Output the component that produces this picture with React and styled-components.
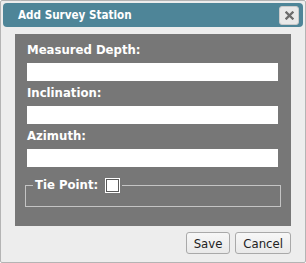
import styled, { createGlobalStyle } from 'styled-components';

const GlobalStyle = createGlobalStyle`
  html, body {
    margin: 0;
    padding: 0;
    background: #ffffff;
  }
  body {
    font-family: "DejaVu Sans Condensed", "DejaVu Sans", sans-serif;
  }
`

const Dialog = styled.div`
  width: 306px;
  height: 263px;
  box-sizing: border-box;
  border: 1px solid #b4b4b4;
  border-radius: 2px;
  background: #ededed;
  padding: 2px;
  display: flex;
  flex-direction: column;
`

const TitleBar = styled.div`
  height: 24px;
  box-sizing: border-box;
  background: #4e8598;
  border-radius: 4px;
  display: flex;
  align-items: center;
  justify-content: space-between;
  padding: 0 4px 0 15px;
`

const Title = styled.span`
  color: #ffffff;
  font-weight: bold;
  font-size: 11.6px;
`

const CloseButton = styled.button`
  width: 20px;
  height: 19px;
  box-sizing: border-box;
  margin-top: 1px;
  padding: 0;
  border: 1px solid #cacaca;
  border-radius: 3px;
  background: #e9e9e9;
  display: flex;
  align-items: center;
  justify-content: center;
`

const Panel = styled.div`
  margin: 7px 12px 0 12px;
  height: 192px;
  box-sizing: border-box;
  background: #777777;
  padding: 8px 13px 0 12px;
  display: flex;
  flex-direction: column;
`

const Label = styled.label`
  color: #ffffff;
  font-weight: bold;
  font-size: 13px;
  line-height: 16px;
  height: 16px;
  margin-top: ${p => (p.$first ? '0' : '4px')};
`

const TextInput = styled.input`
  display: block;
  margin: 5px 0 0 0;
  height: 18px;
  box-sizing: border-box;
  border: none;
  background: #ffffff;
  padding: 0 3px;
  font-size: 12px;
  outline: none;
`

const FieldSet = styled.fieldset`
  margin: 10px -3px 0 -2px;
  border: 1px solid #c4c4c4;
  padding: 0 0 13px 7px;
  min-width: 0;
`

const Legend = styled.legend`
  padding: 0 3px 0 2px;
  display: flex;
  align-items: center;
  color: #ffffff;
  font-weight: bold;
  font-size: 13px;
  line-height: 16px;
`

const CheckBox = styled.span`
  display: inline-block;
  width: 11px;
  height: 11px;
  margin-left: 8px;
  background: #ffffff;
  border: 1px solid #5a5a5a;
  outline: 1px solid #ffffff;
`

const Footer = styled.div`
  display: flex;
  justify-content: flex-end;
  gap: 5px;
  padding: 6px 12px 0 0;
`

const Button = styled.button`
  height: 22px;
  box-sizing: border-box;
  padding: 0 7px;
  border: 1px solid #a9a9a9;
  border-radius: 3px;
  background: linear-gradient(#f7f7f7, #e9e9e9);
  color: #222222;
  font-family: "DejaVu Sans Condensed", "DejaVu Sans", sans-serif;
  font-size: 13px;
`

const CloseIcon = () => (
  <svg width="9" height="9" viewBox="0 0 9 9">
    <path d="M1.5 1.5 L7.5 7.5 M7.5 1.5 L1.5 7.5" stroke="#6b6b6b" strokeWidth="2.3" strokeLinecap="square" />
  </svg>
)

const App = () => {
  return (
    <>
      <GlobalStyle />
      <Dialog>
        <TitleBar>
          <Title>Add Survey Station</Title>
          <CloseButton><CloseIcon /></CloseButton>
        </TitleBar>
        <Panel>
          <Label $first>Measured Depth:</Label>
          <TextInput type="text" />
          <Label>Inclination:</Label>
          <TextInput type="text" />
          <Label>Azimuth:</Label>
          <TextInput type="text" />
          <FieldSet>
            <Legend>Tie Point:<CheckBox /></Legend>
          </FieldSet>
        </Panel>
        <Footer>
          <Button>Save</Button>
          <Button>Cancel</Button>
        </Footer>
      </Dialog>
    </>
  );
};

export default App;
